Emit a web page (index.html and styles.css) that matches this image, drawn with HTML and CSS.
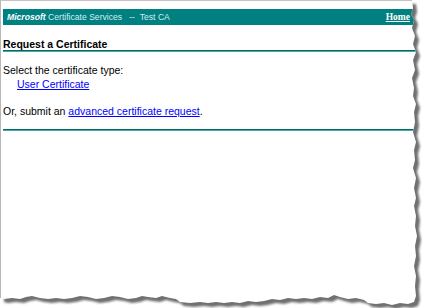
FILE: index.html
```html
<!DOCTYPE html>
<html>
<head>
    <title>Microsoft Certificate Services</title>
    <link rel="stylesheet" href="styles.css">
</head>
<body>
    <div class="page">
        <div class="header">
            <span class="site"><b><i>Microsoft</i></b> Certificate Services&nbsp;&nbsp;&nbsp;--&nbsp;&nbsp;Test CA</span>
            <a class="home" href="#">Home</a>
        </div>

        <div class="heading">Request a Certificate</div>

        <div class="section">
            <div>Select the certificate type:</div>
            <div class="choice"><a href="#">User Certificate</a></div>
        </div>

        <div class="section next">
            Or, submit an <a href="#">advanced certificate request</a>.
        </div>

        <div class="rule"></div>
    </div>

    <!-- torn paper edge -->
    <svg class="tear" width="424" height="308" viewBox="0 0 424 308">
        <defs>
            <clipPath id="outside">
                <path clip-rule="evenodd" d="M0 0H424V308H0Z M0 0 L412 0 L413 8 L411 14 L414 20 L412 28 L415 36 L413 44 L416 52 L413 60 L415 70 L412 78 L414 88 L413 96 L416 104 L414 112 L415 122 L413 132 L416 142 L414 150 L415 160 L413 168 L416 178 L414 188 L416 198 L414 206 L416 216 L415 226 L417 236 L415 246 L416 256 L414 266 L416 276 L415 286 L416 296 L414 302 L408 304 L400 303 L392 305 L384 303 L376 304 L368 303 L364 300 L356 298 L348 299 L340 297 L334 295 L328 298 L320 297 L312 299 L304 298 L296 299 L288 298 L280 300 L272 299 L264 301 L256 302 L248 301 L240 303 L232 302 L224 303 L216 302 L208 303 L200 302 L190 303 L180 302 L176 299 L170 298 L162 296 L156 298 L148 297 L142 296 L136 298 L128 299 L120 297 L112 296 L104 298 L96 299 L88 297 L80 296 L72 298 L64 299 L56 298 L48 299 L40 298 L32 296 L26 297 L20 299 L12 298 L4 299 L0 298 Z"/>
            </clipPath>
            <filter id="soft" x="-5%" y="-5%" width="110%" height="110%">
                <feGaussianBlur stdDeviation="1.1"/>
            </filter>
        </defs>
        <g clip-path="url(#outside)">
            <rect width="424" height="308" fill="#fff"/>
            <path class="shadow" filter="url(#soft)" transform="translate(4 4)" d="M0 0 L412 0 L413 8 L411 14 L414 20 L412 28 L415 36 L413 44 L416 52 L413 60 L415 70 L412 78 L414 88 L413 96 L416 104 L414 112 L415 122 L413 132 L416 142 L414 150 L415 160 L413 168 L416 178 L414 188 L416 198 L414 206 L416 216 L415 226 L417 236 L415 246 L416 256 L414 266 L416 276 L415 286 L416 296 L414 302 L408 304 L400 303 L392 305 L384 303 L376 304 L368 303 L364 300 L356 298 L348 299 L340 297 L334 295 L328 298 L320 297 L312 299 L304 298 L296 299 L288 298 L280 300 L272 299 L264 301 L256 302 L248 301 L240 303 L232 302 L224 303 L216 302 L208 303 L200 302 L190 303 L180 302 L176 299 L170 298 L162 296 L156 298 L148 297 L142 296 L136 298 L128 299 L120 297 L112 296 L104 298 L96 299 L88 297 L80 296 L72 298 L64 299 L56 298 L48 299 L40 298 L32 296 L26 297 L20 299 L12 298 L4 299 L0 298 Z"/>
        </g>
    </svg>
</body>
</html>
```

FILE: styles.css
```css
body {
    margin: 0;
    background: #fff;
    font-family: "Liberation Sans", Arial, sans-serif;
    font-size: 10.5px;
    color: #000;
}

.page {
    height: 297px;
    border-top: 1px solid #c4c4c4;
    border-left: 1px solid #b8b8b8;
    padding: 8px 0 0 2px;
    overflow: hidden;
}

.header {
    display: flex;
    justify-content: space-between;
    align-items: center;
    height: 16px;
    padding: 0 14px 0 4px;
    background-color: #008080;
}

.site {
    font-size: 8.6px;
    color: #d6eeee;
}

.site b {
    color: #fff;
}

.home {
    font-family: "Liberation Serif", "Times New Roman", serif;
    font-weight: bold;
    font-size: 9.5px;
    color: #fff;
}

.heading {
    margin-top: 14px;
    padding-bottom: 1px;
    font-weight: bold;
    line-height: 10px;
    border-bottom: 1px solid #006c6c;
    box-shadow: 0 1px 0 #4da6a6;
}

.section {
    margin-top: 12px;
    line-height: 14px;
}

.section.next {
    margin-top: 13px;
}

.choice {
    padding-left: 14px;
}

a {
    color: #0000ff;
}

.rule {
    margin-top: 11px;
    height: 1px;
    border-top: 1px solid #006c6c;
    background: #4da6a6;
}

.tear {
    position: absolute;
    top: 0;
    left: 0;
    pointer-events: none;
}

.shadow {
    fill: #6f6f6f;
}
```
